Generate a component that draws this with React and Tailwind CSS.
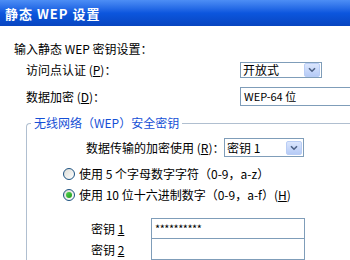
import React from "react";

const F = { fontFamily: '"SimSun","Noto Sans CJK SC","DejaVu Sans",sans-serif' };

function Arrow() {
  return (
    <div className="w-[16px] h-[14px] mr-[1px] rounded-[2px] bg-gradient-to-b from-[#dbe6fd] to-[#b6cbf6] border border-[#b9cdf5] flex items-center justify-center">
      <svg width="8" height="6" viewBox="0 0 8 6">
        <path d="M1 1.2 L4 4.2 L7 1.2" fill="none" stroke="#4d6185" strokeWidth="1.6" />
      </svg>
    </div>
  );
}

function Select({ text, w, h }) {
  return (
    <div className={`${w} ${h} border border-[#7f9db9] bg-white flex items-center justify-between`}>
      <span className="pl-[2px] text-[12px] leading-none text-black">{text}</span>
      <Arrow />
    </div>
  );
}

function Radio({ checked }) {
  return (
    <div className="w-[12px] h-[12px] rounded-full border border-[#1c5180] bg-gradient-to-br from-[#dcdcd6] to-white flex items-center justify-center">
      {checked && <div className="w-[6px] h-[6px] rounded-full bg-gradient-to-br from-[#55d551] to-[#1a9a18]" />}
    </div>
  );
}

export default function App() {
  return (
    <div className="w-[350px] h-[260px] overflow-hidden bg-white text-black text-[12px]" style={F}>
      <div className="h-[26px] bg-gradient-to-b from-[#4d8ef5] via-[#0c56de] to-[#0845c0] flex items-center pl-[5px] pt-[1px]">
        <span className="text-white font-bold text-[13px] tracking-[1px]" style={F}>静态 WEP 设置</span>
      </div>

      <div className="pt-[15px]">
        <div className="h-[16px] pl-[14px] flex items-center whitespace-nowrap">输入静态 WEP 密钥设置：</div>

        <div className="mt-[5px] h-[16px] flex items-center whitespace-nowrap">
          <span className="pl-[26px] w-[240px] shrink-0">访问点认证 (<span className="underline">P</span>)：</span>
          <Select text="开放式" w="w-[82px]" h="h-[16px]" />
        </div>

        <div className="mt-[9px] h-[19px] flex items-center whitespace-nowrap">
          <span className="pl-[26px] w-[240px] shrink-0">数据加密 (<span className="underline">D</span>)：</span>
          <div className="w-[140px] shrink-0 h-[19px] border border-[#7f9db9] bg-white flex items-center pl-[3px] text-[11px]">WEP-64 位</div>
        </div>

        <fieldset className="mt-[9px] ml-[26px] w-[340px] border-l border-t border-r-0 border-b-0 border-[#b0bfd0] rounded-tl-[4px] pt-[7px] min-w-0">
          <legend className="ml-[4px] px-[3px] text-[#1550d6] text-[12px] leading-[16px] whitespace-nowrap">无线网络（WEP）安全密钥</legend>

          <div className="h-[19px] flex items-center whitespace-nowrap">
            <span className="pl-[59px] w-[197px]">数据传输的加密使用 (<span className="underline">R</span>)：</span>
            <Select text="密钥 1" w="w-[80px]" h="h-[19px]" />
          </div>

          <div className="mt-[9px] h-[16px] pl-[36px] flex items-center gap-[4px] whitespace-nowrap">
            <Radio />
            <span>使用 5 个字母数字字符（0-9，a-z）</span>
          </div>
          <div className="mt-[5px] h-[16px] pl-[36px] flex items-center gap-[4px] whitespace-nowrap">
            <Radio checked />
            <span>使用 10 位十六进制数字（0-9，a-f）(<span className="underline">H</span>)</span>
          </div>

          <div className="mt-[15px] h-[21px] flex items-center whitespace-nowrap">
            <span className="pl-[64px] w-[124px]">密钥 <span className="underline">1</span></span>
            <div className="w-[154px] h-[21px] border border-[#7f9db9] bg-white flex items-center pl-[3px] text-[11px] tracking-[-0.5px]">**********</div>
          </div>
          <div className="h-[21px] flex items-center whitespace-nowrap">
            <span className="pl-[64px] w-[124px]">密钥 <span className="underline">2</span></span>
            <div className="w-[154px] h-[21px] border border-t-0 border-[#7f9db9] bg-white" />
          </div>
        </fieldset>
      </div>
    </div>
  );
}
